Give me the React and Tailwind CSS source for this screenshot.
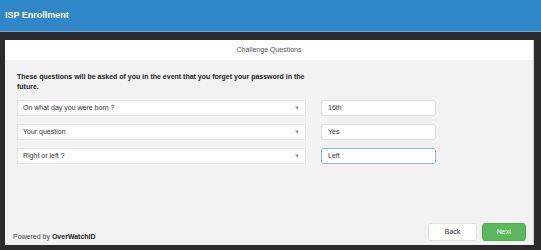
export default function App() {
  const rows = [
    { q: 'On what day you were born ?', a: '16th' },
    { q: 'Your question', a: 'Yes' },
    { q: 'Right or left ?', a: 'Left', focus: true },
  ];

  return (
    <div
      className="flex h-[250px] w-[541px] flex-col overflow-hidden bg-[#2b2b2b]"
      style={{ fontFamily: '"Liberation Sans", Arial, sans-serif' }}
    >
      <div className="flex h-[32px] shrink-0 items-center border-b border-[#6fa6d2] bg-[#2f87c9] px-[5px]">
        <span className="text-[9px] font-bold text-white">ISP Enrollment</span>
      </div>

      <div className="ml-[5px] mt-[8px] flex h-[205px] w-[529px] flex-col border-r border-[#cfcfcf] bg-[#f2f2f2]">
        <div className="flex h-[20px] shrink-0 items-center justify-center bg-white text-[7px] text-[#555]">
          Challenge Questions
        </div>

        <div className="flex flex-1 flex-col px-[12px] pt-[12px]">
          <p className="w-[290px] text-[7px] font-bold leading-[10px] text-[#222]">
            These questions will be asked of you in the event that you forget your password in the future.
          </p>

          <div className="mt-[8px] flex flex-col gap-[8px]">
            {rows.map((r) => (
              <div key={r.q} className="flex items-center">
                <div className="flex h-[16px] w-[289px] items-center justify-between border border-[#e4e4e4] bg-white pl-[5px] pr-[5px] text-[7px] text-[#333]">
                  <span>{r.q}</span>
                  <span className="text-[6px] text-[#999]">▼</span>
                </div>
                <div
                  className={
                    r.focus
                      ? 'ml-[15px] flex h-[16px] w-[115px] items-center rounded-[3px] border border-[#8cbbe6] bg-white px-[6px] text-[7px] text-[#333]'
                      : 'ml-[15px] flex h-[16px] w-[115px] items-center rounded-[3px] border border-[#dcdcdc] bg-white px-[6px] text-[7px] text-[#333]'
                  }
                >
                  {r.a}
                </div>
              </div>
            ))}
          </div>
        </div>

        <div className="mb-[4px] flex items-end justify-between pl-[8px] pr-[7px]">
          <span className="mb-[-1px] text-[7px] text-[#444]">
            Powered by <b className="text-[#222]">OverWatchID</b>
          </span>
          <div className="flex gap-[5px]">
            <button className="h-[18px] w-[49px] rounded-[3px] border border-[#e2e2e2] bg-white text-[7px] text-[#333]">
              Back
            </button>
            <button className="h-[18px] w-[44px] rounded-[3px] border border-[#52ad52] bg-[#5cb85c] text-[7px] text-white">
              Next
            </button>
          </div>
        </div>
      </div>
    </div>
  );
}
